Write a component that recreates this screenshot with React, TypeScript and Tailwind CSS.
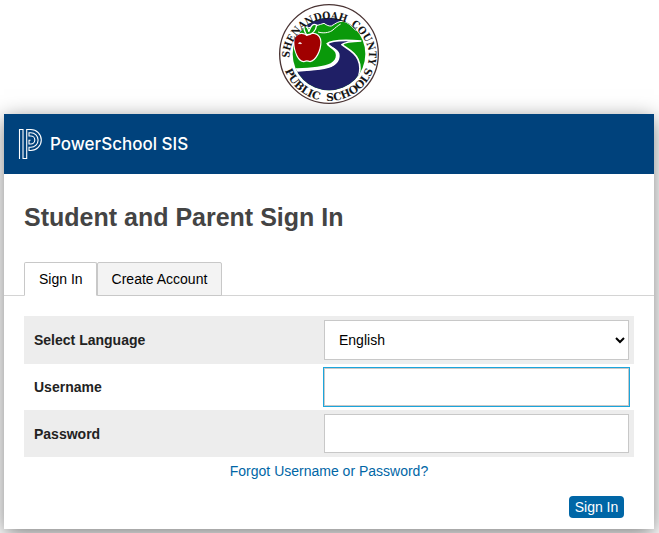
import React from "react";

function DistrictSeal() {
  return (
    <svg
      viewBox="15 12 300 300"
      className="size-[100px]"
      role="img"
      aria-label="Shenandoah County Public Schools"
    >
      <defs>
        <clipPath id="scene">
          <circle cx="165" cy="162" r="109" />
        </clipPath>
        <path id="top-arc" d="M46 174 A120 120 0 0 1 285 162 A120 120 0 0 1 277 205" />
        <path id="bottom-arc" d="M24 162 A141 141 0 0 0 306 162" />
      </defs>
      <circle cx="165" cy="162" r="148" fill="#fff" stroke="#4a3434" strokeWidth="4" />
      <g clipPath="url(#scene)">
        <rect x="50" y="50" width="230" height="230" fill="#0a990a" />
        <path
          d="M100 84 C120 80 136 74 150 70 C158 76 166 79 172 78 C186 70 194 63 206 64 C222 66 232 78 246 92 L280 80 L240 40 L90 40Z"
          fill="#1f1f66"
          stroke="#fff"
          strokeWidth="3"
        />
        <path d="M132 96 C148 101 164 98 174 92 C184 84 192 76 200 72" fill="none" stroke="#fff" strokeWidth="3" />
        <path
          d="M262 123 C230 124 212 126 204 134 C214 144 240 152 252 178 C262 200 258 226 244 250 L200 290 L60 290 L50 212 C100 210 145 206 170 198 C186 190 196 178 192 162 C188 146 164 140 160 131 C172 120 222 120 262 123Z"
          fill="#1f1f66"
          stroke="#fff"
          strokeWidth="5"
        />
        <path
          d="M50 204 C100 206 150 200 170 190 C184 182 188 170 184 158 C178 146 158 140 158 129 C170 140 192 146 196 160 C200 178 190 192 172 201 C150 210 100 214 50 216Z"
          fill="#fff"
        />
      </g>
      <path
        d="M98 108 C86 96 61 101 61 127 C61 155 76 185 90 183 C96 180 103 181 108 183 C123 181 139 153 139 126 C138 101 114 96 98 108Z"
        fill="#a00000"
        stroke="#fff"
        strokeWidth="7"
        paintOrder="stroke"
      />
      <path d="M75 132 C75 128 79 127 82 132" fill="none" stroke="#fff" strokeWidth="4" />
      <path d="M98 105 C90 92 88 84 91 78 C99 81 104 88 104 95 C111 78 116 69 128 75 C126 90 117 103 98 105Z" fill="#0a990a" stroke="#fff" strokeWidth="4" />
      <g fill="#171717" fontWeight="700">
        <g fontFamily="'DejaVu Serif Condensed', 'DejaVu Serif', serif" fontStretch="condensed" fontSize="31">
          <text>
            <textPath href="#top-arc" startOffset="0">SHENANDOAH</textPath>
          </text>
          <text>
            <textPath href="#top-arc" startOffset="253">COUNTY</textPath>
          </text>
        </g>
        <g fontFamily="'DejaVu Serif', serif" fontSize="32">
          <text>
            <textPath href="#bottom-arc" startOffset="50">PUBLIC</textPath>
          </text>
          <text>
            <textPath href="#bottom-arc" startOffset="213">SCHOOLS</textPath>
          </text>
        </g>
      </g>
    </svg>
  );
}

function ProductMark() {
  return (
    <svg viewBox="0 0 24 32" className="h-8 w-6" fill="none" stroke="#fff" strokeWidth="1.1" aria-hidden="true">
      <path d="M1.500 31V1.500H5V30.500H8.700V1.500H12.800A10.500 10.500 0 0 1 12.800 22.500H11V19.300H12.800A7.300 7.300 0 0 0 12.800 4.700H11V8H12.800A4 4 0 0 1 12.800 16H11V12.300H12.500" />
    </svg>
  );
}

const rowClass = "flex items-center py-1";
const labelClass = "flex-1 pl-[10px] font-bold text-[#222]";
const fieldClass = "mr-[5px] w-1/2 border border-[#c8c8c8] bg-white px-[10px] text-black";

export default function App() {
  return (
    <div className="overflow-hidden bg-white px-1 pt-1 pb-1 font-['Liberation_Sans',Arial,sans-serif] text-sm leading-5 text-black">
      <div className="flex justify-center pr-px pb-[10px]">
        <DistrictSeal />
      </div>
      <main className="mr-px bg-white shadow-[0_5px_20px_rgba(0,0,0,0.5)]">
        <header className="flex h-[60px] items-center gap-2 bg-[#00427c] pl-[14px] text-white">
          <ProductMark />
          <span className="font-['Inter',sans-serif] text-[17px] font-medium">PowerSchool SIS</span>
        </header>
        <h1 className="px-5 pt-[27px] text-[25px] leading-8 font-bold text-[#444]">Student and Parent Sign In</h1>
        <nav className="mt-[29px] flex border-b border-[#d4d4d4] px-5">
          <button type="button" className="-mb-px h-[34px] rounded-t-xs border border-b-white border-[#c8c8c8] bg-white pr-[13px] pl-[14px]">
            Sign In
          </button>
          <button type="button" className="-mb-px h-[34px] rounded-t-xs border border-[#c8c8c8] bg-[#f3f3f3] px-[14px]">
            Create Account
          </button>
        </nav>
        <form className="px-5 pt-5 pb-[11px]" onSubmit={(e) => e.preventDefault()}>
          <div className={`${rowClass} bg-[#ededed]`}>
            <label htmlFor="language" className={labelClass}>Select Language</label>
            <select id="language" className={`${fieldClass} h-10`}>
              <option>English</option>
            </select>
          </div>
          <div className={rowClass}>
            <label htmlFor="username" className={labelClass}>Username</label>
            <input id="username" type="text" className={`${fieldClass} h-[38px] outline outline-[#1ba5dc]`} />
          </div>
          <div className={`${rowClass} bg-[#ededed]`}>
            <label htmlFor="password" className={labelClass}>Password</label>
            <input id="password" type="password" className={`${fieldClass} h-[39px]`} />
          </div>
          <div className="pt-1 text-center">
            <a href="#forgot" className="text-[#0066a6]">Forgot Username or Password?</a>
          </div>
          <div className="flex justify-end pt-[15px] pr-[10px]">
            <button type="submit" className="h-[22px] w-[55px] rounded-sm bg-[#0066a6] text-white">Sign In</button>
          </div>
        </form>
      </main>
    </div>
  );
}
